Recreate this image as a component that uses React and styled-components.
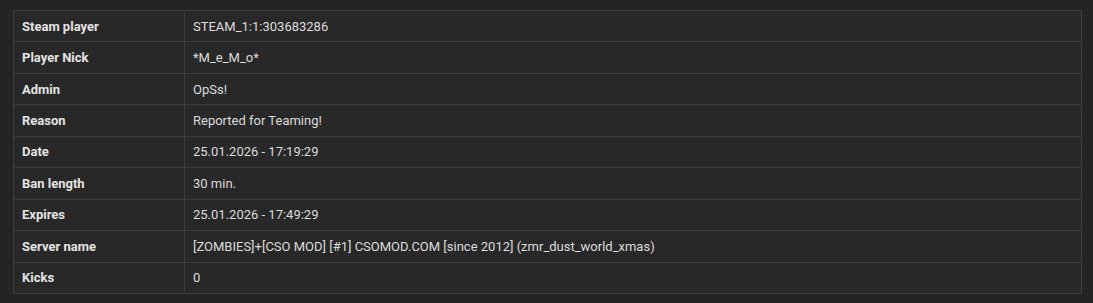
import React from 'react';
import styled, { createGlobalStyle } from 'styled-components';

const GlobalStyle = createGlobalStyle`
  body {
    margin: 0;
    background-color: #242424;
    font-family: Roboto, "Liberation Sans", Arial, sans-serif;
  }
`;

const Wrapper = styled.div`
  padding: 10px 11px 9px 13px;
`;

const Table = styled.table`
  width: 1069px;
  height: 284px;
  border-collapse: collapse;
  background-color: #282828;
  border: 1px solid #3c3c3c;
  font-size: 13px;
`;

const Row = styled.tr`
  border-bottom: 1px solid #3c3c3c;
`;

const Cell = styled.td`
  padding: 0 8px;
  border-right: 1px solid #3c3c3c;
  color: ${(props) => (props.$label ? '#e4e4e4' : '#dcdcdc')};
  font-weight: ${(props) => (props.$label ? 700 : 400)};
  width: ${(props) => (props.$label ? '154px' : 'auto')};
  vertical-align: middle;
  white-space: nowrap;
`;

const rows = [
  ['Steam player', 'STEAM_1:1:303683286'],
  ['Player Nick', '*M_e_M_o*'],
  ['Admin', 'OpSs!'],
  ['Reason', 'Reported for Teaming!'],
  ['Date', '25.01.2026 - 17:19:29'],
  ['Ban length', '30 min.'],
  ['Expires', '25.01.2026 - 17:49:29'],
  ['Server name', '[ZOMBIES]+[CSO MOD] [#1] CSOMOD.COM [since 2012] (zmr_dust_world_xmas)'],
  ['Kicks', '0'],
];

function App() {
  return (
    <>
      <GlobalStyle />
      <Wrapper>
        <Table>
          <tbody>
            {rows.map(([label, value]) => (
              <Row key={label}>
                <Cell $label>{label}</Cell>
                <Cell>{value}</Cell>
              </Row>
            ))}
          </tbody>
        </Table>
      </Wrapper>
    </>
  );
}

export default App;
